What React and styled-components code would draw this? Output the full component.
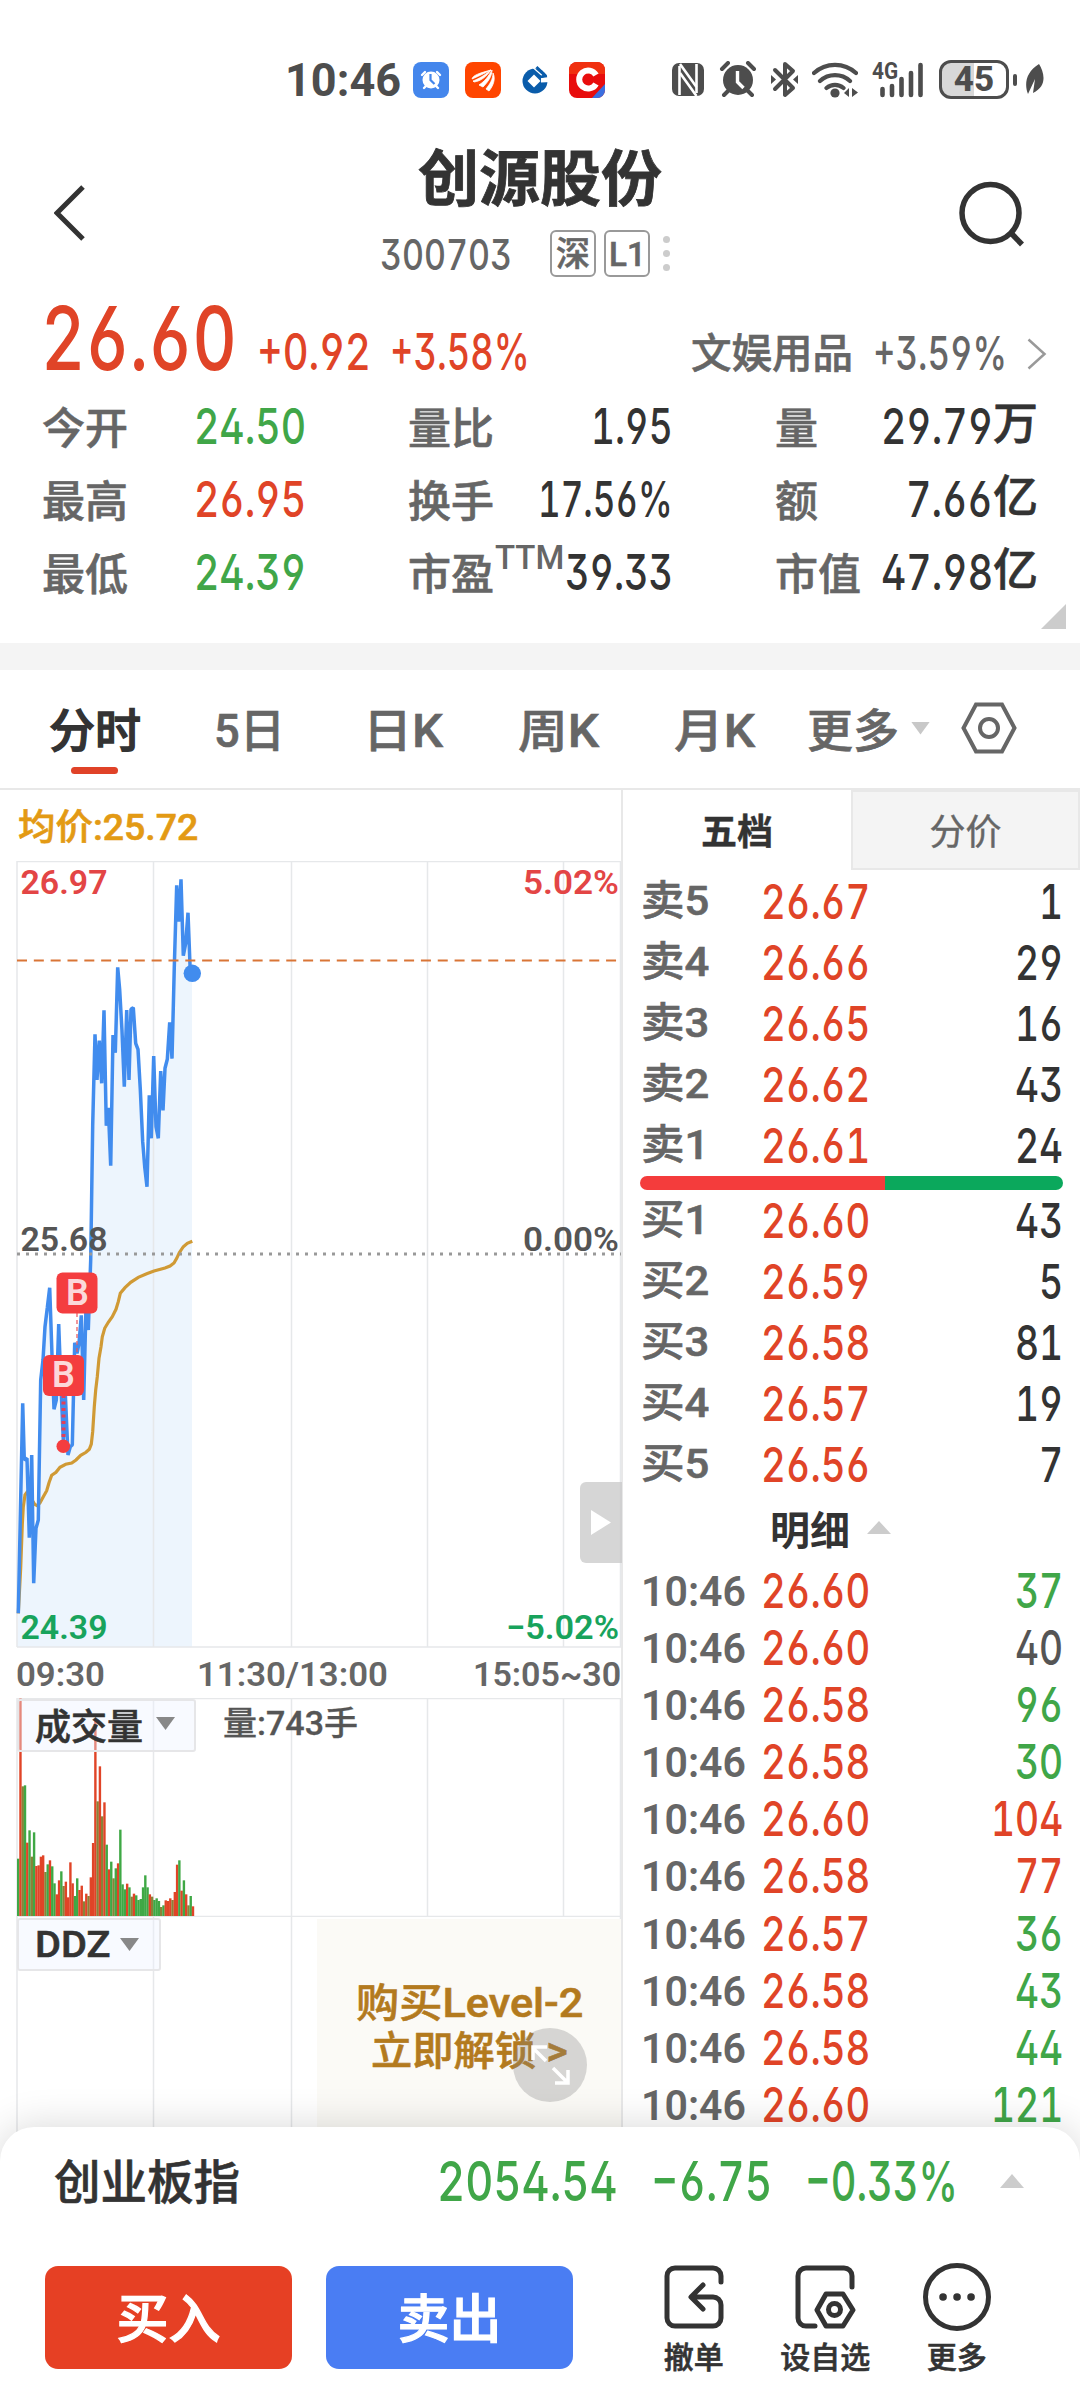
import React, { useLayoutEffect, useRef, useState } from 'react'
import styled, { createGlobalStyle, css } from 'styled-components'

const RED = '#e04427';
const GREEN = '#40a648';

const stats = [
  { label: '今开', value: '24.50', w: 112, color: GREEN },
  { label: '量比', value: '1.95', w: 82 },
  { label: '量', value: '29.79', unit: '万', w: 112 },
  { label: '最高', value: '26.95', w: 112, color: RED },
  { label: '换手', value: '17.56%', w: 135 },
  { label: '额', value: '7.66', unit: '亿', w: 87 },
  { label: '最低', value: '24.39', w: 112, color: GREEN },
  { label: '市盈', sup: 'TTM', value: '39.33', w: 108 },
  { label: '市值', value: '47.98', unit: '亿', w: 112 },
];

const sells = [
  ['卖5', '26.67', '1'],
  ['卖4', '26.66', '29'],
  ['卖3', '26.65', '16'],
  ['卖2', '26.62', '43'],
  ['卖1', '26.61', '24'],
];

const buys = [
  ['买1', '26.60', '43'],
  ['买2', '26.59', '5'],
  ['买3', '26.58', '81'],
  ['买4', '26.57', '19'],
  ['买5', '26.56', '7'],
];

const trades = [
  ['26.60', '37', GREEN],
  ['26.60', '40', '#555'],
  ['26.58', '96', GREEN],
  ['26.58', '30', GREEN],
  ['26.60', '104', RED],
  ['26.58', '77', RED],
  ['26.57', '36', GREEN],
  ['26.58', '43', GREEN],
  ['26.58', '44', GREEN],
  ['26.60', '121', GREEN],
];

// minute prices, in thirds of a pixel
const price = [
  [55, 2257], [68, 1627], [73, 1797], [81, 1792], [88, 2030], [95, 1782], [101, 2167], [108, 2002], [115, 1977],
  [122, 1557], [129, 1497], [135, 1397], [142, 1340], [149, 1280], [156, 1482], [162, 1645], [169, 1617], [176, 1389],
  [183, 1577], [190, 1737], [196, 1597], [204, 1782], [211, 1757], [217, 1752], [224, 1445], [231, 1477], [237, 1447],
  [244, 1363], [251, 1617], [258, 1337], [265, 1407], [272, 1197], [278, 792], [285, 520], [291, 657], [298, 539],
  [305, 667], [312, 448], [319, 794], [325, 740], [332, 914], [339, 522], [346, 575], [353, 319], [359, 387],
  [366, 509], [373, 677], [380, 447], [387, 657], [393, 445], [400, 440], [407, 547], [414, 565], [421, 685],
  [428, 842], [434, 917], [441, 977], [448, 703], [454, 832], [461, 585], [468, 797], [475, 832], [482, 630],
  [489, 748], [495, 622], [502, 595], [509, 484], [516, 593], [523, 317], [530, 73], [536, 182], [543, 55],
  [550, 284], [557, 247], [564, 155], [570, 312], [576, 337],
];

const average = [
  [55, 2257], [62, 2120], [67, 1990], [70, 1937], [75, 1902], [80, 1895], [88, 1905], [95, 1915], [104, 1930],
  [112, 1934], [120, 1925], [130, 1907], [140, 1889], [147, 1865], [155, 1843], [168, 1834], [180, 1819],
  [197, 1810], [215, 1806], [228, 1797], [242, 1783], [258, 1774], [268, 1765], [274, 1749], [278, 1712],
  [283, 1637], [287, 1587], [292, 1547], [297, 1492], [303, 1457], [307, 1427], [314, 1402], [325, 1384],
  [337, 1367], [348, 1345], [355, 1322], [361, 1297], [375, 1280], [392, 1264], [415, 1249], [440, 1238],
  [462, 1230], [495, 1221], [510, 1215], [522, 1206], [530, 1192], [538, 1175], [550, 1157], [562, 1147], [577, 1141],
];

// r = up, g = down, m = both sides
const volume = 'g172 r652 m389 g392 r220 g257 m178 g251 r150 r152 r178 r182 m132 g155 r167 g149 g98 r65 r107 g134 m90 r103 r56 r161 r98 g60 g113 r78 r91 m44 r67 m60 r116 r219 r590 m344 r449 m299 r341 g214 r140 g163 m113 g143 r158 g259 g95 g80 r97 g86 m58 r67 g62 g48 g51 g86 g122 g86 r65 m58 g48 g53 g45 m27 g32 r47 r45 r53 m48 r72 r154 g167 r76 g107 r65 m32 g60 r29'
  .split(' ')
  .map((b) => ({ color: { r: RED, g: '#3fa845', m: '#8a8238' }[b[0]], h: Number(b.slice(1)) / 3 }));

const toPoints = (list) => list.map(([x, y]) => `${(x / 3).toFixed(1)},${(y / 3).toFixed(1)}`).join(' ');

// Squeezes or stretches a run of text to a given width
function Fit({ w, children, ...rest }) {
  const ref = useRef(null);
  const [k, setK] = useState(1);

  useLayoutEffect(() => {
    setK(w / ref.current.offsetWidth);
  }, [w, children])

  return (
    <FitBox $w={w} {...rest}>
      <FitInner ref={ref} style={{ transform: `scaleX(${k})` }}>{children}</FitInner>
    </FitBox>
  )
}

function StatusBar() {
  return (
    <StatusRow>
      <Clock w={116}>10:46</Clock>
      <AppIcons>
        <svg width="36" height="36" viewBox="0 0 36 36">
          <rect width="36" height="36" rx="8" fill="#4486ec" />
          <circle cx="18" cy="18" r="8.5" fill="#fff" />
          <path d="M9 13l3-3M27 13l-3-3M11 26l2-2M25 26l-2-2" stroke="#fff" strokeWidth="2.4" strokeLinecap="round" />
          <path d="M17.500 12v6l4 4" stroke="#4486ec" strokeWidth="2.200" fill="none" />
        </svg>
        <svg width="36" height="36" viewBox="0 0 36 36">
          <rect width="36" height="36" rx="8" fill="#ff4500" />
          <path d="M7 17c1-4 8-6 19-9-6 3-12 6-19 9z M8 19c5-2 11-5 18-11-5 7-10 11-17 12z M14 23c6-4 9-8 13-15 0 6-4 12-9 17z M21 27c4-5 7-10 7-16 3 6 0 13-4 18z" fill="#fff" stroke="#fff" strokeWidth=".8" />
        </svg>
        <svg width="36" height="36" viewBox="0 0 36 36">
          <circle cx="18" cy="19" r="12.500" fill="#0a5caa" />
          <path d="M24 16l10-3v7l-10 .5z" fill="#fff" />
          <path d="M17 12.500l6.500 6.500-6.500 6.500-6.500-6.500z" fill="#fff" />
          <path d="M16 5.500l9 8M19 4.500l10 9.500" stroke="#fff" strokeWidth="1.200" />
          <path d="M19.500 5l9 8.500M23 15l7-1" stroke="#0a5caa" strokeWidth="2.600" />
        </svg>
        <svg width="36" height="36" viewBox="0 0 36 36">
          <rect width="36" height="36" rx="8" fill="#e80d0d" />
          <path d="M0 12V8a8 8 0 0 1 8-8h20a8 8 0 0 1 8 8v4z" fill="#f0300f" />
          <path d="M36 22v6a8 8 0 0 1-8 8h-5z" fill="#3a6fe0" />
          <path d="M27 13a9 9 0 1 0 0 9" fill="none" stroke="#fff" strokeWidth="6" />
        </svg>
      </AppIcons>
      <SystemIcons>
        <svg width="34" height="36" viewBox="0 0 34 36">
          <rect x="1" y="1" width="32" height="33" rx="7" fill="#4d4d4d" />
          <path d="M8.500 33V4M25.500 2v29" stroke="#fff" strokeWidth="2.600" />
          <path d="M9 2l16.500 23M9 11l16.500 23" stroke="#fff" strokeWidth="2.600" />
        </svg>
        <svg width="38" height="37" viewBox="0 0 38 37">
          <circle cx="19" cy="19" r="15" fill="#4d4d4d" />
          <path d="M3 8l6-6M35 8l-6-6M5 34l6-6M33 34l-6-6" stroke="#4d4d4d" strokeWidth="4" strokeLinecap="round" />
          <path d="M18.500 10v11l6 6" stroke="#fff" strokeWidth="3.400" fill="none" />
        </svg>
        <svg width="27" height="37" viewBox="0 0 27 37">
          <path d="M4 9l18 18-8 7V3l8 7L4 28" fill="none" stroke="#4d4d4d" strokeWidth="4" strokeLinejoin="round" strokeLinecap="round" />
          <path d="M0 14l5 4.500-5 4.500zM27 14l-5 4.500 5 4.500z" fill="#4d4d4d" />
        </svg>
        <svg width="46" height="37" viewBox="0 0 46 37">
          <path d="M2 12a31 31 0 0 1 42 0M8 20a22 22 0 0 1 30 0M14.500 27a13 13 0 0 1 17 0" fill="none" stroke="#4d4d4d" strokeWidth="4.200" strokeLinecap="round" />
          <circle cx="23" cy="32" r="4.600" fill="#4d4d4d" />
          <path d="M37 27v9l-5-4zM40 27v9l6-4.500z" fill="#4d4d4d" />
        </svg>
        <Signal>
          <Net w={26}>4G</Net>
          <svg width="46" height="36" viewBox="0 0 46 36">
            <path d="M2.500 27v6M12 24v9M21.500 17v16M31 11v22M40.500 3v30" stroke="#4d4d4d" strokeWidth="4.600" strokeLinecap="round" />
          </svg>
        </Signal>
        <Battery>45</Battery>
        <Nub />
        <svg width="20" height="32" viewBox="0 0 20 32">
          <path d="M14 0c5 8 9 22-6 29L10 15 3 30C-1 20 1 8 14 0z" fill="#4d4d4d" />
        </svg>
      </SystemIcons>
    </StatusRow>
  )
}

function Header() {
  return (
    <HeaderGrid>
      <Back width="32" height="56" viewBox="0 0 32 56">
        <path d="M29 2L3 28l26 26" fill="none" stroke="#333" strokeWidth="5" />
      </Back>
      <div>
        <Title><Fit w={244}>创源股份</Fit></Title>
        <SubTitle>
          <Code w={132}>300703</Code>
          <Badge $gap={38}>深</Badge>
          <Badge $gap={8}><Fit w={37}>L1</Fit></Badge>
          <Dots><i /><i /><i /></Dots>
        </SubTitle>
      </div>
      <Search width="66" height="70" viewBox="0 0 66 70">
        <circle cx="31.500" cy="33" r="28.500" fill="none" stroke="#333" strokeWidth="5.500" />
        <path d="M51 52l12 12.500" stroke="#333" strokeWidth="5.500" />
      </Search>
    </HeaderGrid>
  )
}

function Quote() {
  return (
    <QuoteBox>
      <PriceRow>
        <Last w={196}>26.60</Last>
        <Change w={114} $gap={20}>+0.92</Change>
        <Change w={140} $gap={19}>+3.58%</Change>
        <Sector>
          <SectorName>文娱用品</SectorName>
          <Fit w={134}>+3.59%</Fit>
          <svg width="20" height="32" viewBox="0 0 20 32">
            <path d="M1.500 1.500L17.500 16 1.500 30.500" fill="none" stroke="#999" strokeWidth="2.500" />
          </svg>
        </Sector>
      </PriceRow>
      <StatGrid>
        {stats.map((s, i) => (
          <Stat key={s.label} $first={i % 3 === 0}>
            <StatLabel>{s.label}{s.sup && <Sup>{s.sup}</Sup>}</StatLabel>
            <StatValue $color={s.color}><Fit w={s.w}>{s.value}</Fit>{s.unit && <Unit>{s.unit}</Unit>}</StatValue>
          </Stat>
        ))}
      </StatGrid>
      <Corner />
    </QuoteBox>
  )
}

function PriceChart() {
  const line = toPoints(price);
  return (
    <svg width="622" height="787" viewBox="0 0 622 787">
      <polygon points={`17,786 ${line} 192,786`} fill="#edf5fd" />
      <path d="M17 0v786M153.500 0v786M291.500 0v786M427.500 0v786M563.500 0v786M620.500 0v786M17 .5h604M17 786h604" stroke="#e6e8ea" strokeWidth="1.500" fill="none" />
      <polyline points={toPoints(average)} fill="none" stroke="#d09a35" strokeWidth="3.200" />
      <polyline points={line} fill="none" stroke="#418cee" strokeWidth="3.500" strokeLinejoin="bevel" />
      <path d="M17 99.500h604" stroke="#d97536" strokeWidth="2.200" strokeDasharray="10 6.830" />
      <path d="M17 393h604" stroke="#999" strokeWidth="3" strokeDasharray="3 6" />
      <circle cx="192.300" cy="112.300" r="8.700" fill="#418cee" />
      <path d="M77 452v42" stroke="#e8545a" strokeWidth="1.200" strokeDasharray="4 3" />
      <path d="M63.500 534v45" stroke="#e0405a" strokeWidth="4" strokeDasharray="3 3.500" />
      <circle cx="63.300" cy="585.300" r="6.800" fill="#f43d3f" />
      <rect x="56.500" y="411.500" width="41" height="41" rx="6" fill="#f43d3f" />
      <rect x="43" y="494" width="41" height="41" rx="6" fill="#f43d3f" />
      <Mark x="77.500" y="443.500">B</Mark>
      <Mark x="63.500" y="526">B</Mark>
      <AxisText x="20.500" y="33" textLength="87" lengthAdjust="spacingAndGlyphs" fill="#e34545">26.97</AxisText>
      <AxisText x="523" y="33" textLength="96" lengthAdjust="spacingAndGlyphs" fill="#e34545">5.02%</AxisText>
      <AxisText x="20.500" y="390" textLength="87" lengthAdjust="spacingAndGlyphs" fill="#555">25.68</AxisText>
      <AxisText x="523" y="390" textLength="96" lengthAdjust="spacingAndGlyphs" fill="#555">0.00%</AxisText>
      <AxisText x="20.500" y="778" textLength="87" lengthAdjust="spacingAndGlyphs" fill="#18a35c">24.39</AxisText>
      <AxisText x="506" y="778" textLength="113" lengthAdjust="spacingAndGlyphs" fill="#18a35c">−5.02%</AxisText>
    </svg>
  )
}

function VolumeChart() {
  return (
    <svg width="622" height="219" viewBox="0 0 622 219">
      <path d="M17 0v219M153.500 0v219M291.500 0v219M427.500 0v219M563.500 0v219M620.500 0v219M17 .5h604M17 218.500h604" stroke="#e6e8ea" strokeWidth="1.500" fill="none" />
      {volume.map((b, i) => (
        <rect key={i} x={17 + i * 2.27} y={218 - b.h} width="2.400" height={b.h} fill={b.color} />
      ))}
    </svg>
  )
}

function Book() {
  const row = ([name, p, qty]) => (
    <BookRow key={name}>
      <BookName w={68}>{name}</BookName>
      <BookPrice w={109}>{p}</BookPrice>
      <Qty w={qty.length * 24}>{qty}</Qty>
    </BookRow>
  );

  return (
    <BookPanel>
      <BookTabs>
        <BookTab $active>五档</BookTab>
        <BookTab>分价</BookTab>
      </BookTabs>
      {sells.map(row)}
      <Ratio />
      {buys.map(row)}
      <DetailTitle>明细<Triangle $up $w={24} $h={13} $color="#ccc" /></DetailTitle>
      {trades.map(([p, qty, color], i) => (
        <TradeRow key={i}>
          <TradeTime w={105}>10:46</TradeTime>
          <BookPrice w={109}>{p}</BookPrice>
          <Qty w={qty.length * 24} $color={color}>{qty}</Qty>
        </TradeRow>
      ))}
    </BookPanel>
  )
}

function BottomSheet() {
  return (
    <Sheet>
      <IndexRow>
        <IndexName>创业板指</IndexName>
        <IndexNum w={181}>2054.54</IndexNum>
        <IndexNum w={121}>−6.75</IndexNum>
        <IndexNum w={153}>−0.33%</IndexNum>
        <Triangle $up $w={24} $h={14} $color="#ccc" />
      </IndexRow>
      <ActionRow>
        <TradeButton $bg="#e64024">买入</TradeButton>
        <TradeButton $bg="#4a7df3">卖出</TradeButton>
        <Tools>
          <Tool>
            <svg width="68" height="68" viewBox="0 0 68 68">
              <path d="M61 19v-6a8 8 0 0 0-8-8H15a8 8 0 0 0-8 8v42a8 8 0 0 0 8 8h38a8 8 0 0 0 8-8V42a8 8 0 0 0-8-8H33M43 22L31 34l12 12" />
            </svg>
            撤单
          </Tool>
          <Tool>
            <svg width="68" height="68" viewBox="0 0 68 68">
              <path d="M61 24V13a8 8 0 0 0-8-8H15a8 8 0 0 0-8 8v42a8 8 0 0 0 8 8h9M35 31h17l10 16-10 16H35L26 47z" />
              <circle cx="43.500" cy="46.500" r="6" />
            </svg>
            设自选
          </Tool>
          <Tool>
            <svg width="68" height="68" viewBox="0 0 68 68">
              <circle cx="34" cy="34" r="31.500" />
              <path d="M20 34h.1M34 34h.1M48 34h.1" strokeWidth="7.500" />
            </svg>
            更多
          </Tool>
        </Tools>
      </ActionRow>
    </Sheet>
  )
}

function App() {
  return (
    <Phone>
      <GlobalStyle />
      <StatusBar />
      <Header />
      <Quote />
      <Band />
      <Tabs>
        <Tab $w={165} $active><Fit w={92}>分时</Fit></Tab>
        <Tab $w={149}><Fit w={71}>5日</Fit></Tab>
        <Tab $w={155}><Fit w={80}>日K</Fit></Tab>
        <Tab $w={156}><Fit w={81}>周K</Fit></Tab>
        <Tab $w={133}><Fit w={81}>月K</Fit></Tab>
        <Tab $w={104}><Fit w={92}>更多</Fit></Tab>
        <Triangle $w={19} $h={13} $color="#c8c8c8" />
        <Hexagon width="56" height="52" viewBox="0 0 56 52">
          <path d="M15 2.500h26L53.500 26 41 49.500H15L2.500 26z" />
          <circle cx="28" cy="26" r="9" />
        </Hexagon>
      </Tabs>
      <Main>
        <ChartPanel>
          <AvgRow><Fit w={180}>均价:25.72</Fit></AvgRow>
          <PriceChart />
          <TimeAxis>
            <Fit w={89}>09:30</Fit>
            <MidTime w={191}>11:30/13:00</MidTime>
            <Fit w={148}>15:05~30</Fit>
          </TimeAxis>
          <SubChart>
            <VolumeChart />
            <Picker>成交量<Triangle $w={19} $h={13} $color="#888" /></Picker>
            <VolText><Fit w={135}>量:743手</Fit></VolText>
          </SubChart>
          <DdzChart>
            <svg width="622" height="243" viewBox="0 0 622 243">
              <path d="M17 0v243M153.500 0v243M291.500 0v243M620.500 0v243" stroke="#e6e8ea" strokeWidth="1.500" fill="none" />
            </svg>
            <Picker $narrow><Fit w={75}>DDZ</Fit><Triangle $w={19} $h={13} $color="#888" /></Picker>
            <Promo>
              <Fit w={227}>购买Level-2</Fit>
              <Fit w={197}>立即解锁 &gt;</Fit>
            </Promo>
            <Expand>
              <svg width="74" height="74" viewBox="0 0 74 74">
                <path d="M33 33L20 20M20 32V19h14M40 40l14 14M42 55h13V42" fill="none" stroke="#fff" strokeWidth="3.500" />
              </svg>
            </Expand>
          </DdzChart>
          <Play />
        </ChartPanel>
        <Book />
      </Main>
      <BottomSheet />
    </Phone>
  )
}

const GlobalStyle = createGlobalStyle`
  body {
    margin: 0;
    background: #fff;
  }

  * {
    box-sizing: border-box;
  }

  svg {
    display: block;
    flex: none;
  }
`;

const digits = css`
  font-family: Inter, Roboto, "Noto Sans CJK SC", sans-serif;
  font-feature-settings: 'ss01', 'tnum';
  font-weight: 460;
`;

// between regular and bold
const medium = css`
  font-weight: 500;
  -webkit-text-stroke: 0.6px currentColor;
`;

const Phone = styled.div`
  width: 1080px;
  height: 2400px;
  overflow: hidden;
  background: #fff;
  color: #333;
  font-family: Roboto, "Noto Sans CJK SC", sans-serif;
`;

const FitBox = styled.span`
  display: inline-block;
  flex: none;
  width: ${(p) => p.$w}px;
  white-space: nowrap;
`;

const FitInner = styled.span`
  display: inline-block;
  transform-origin: 0 50%;
`;

const Triangle = styled.i`
  flex: none;
  width: ${(p) => p.$w}px;
  height: ${(p) => p.$h}px;
  background: ${(p) => p.$color};
  clip-path: ${(p) => (p.$up ? 'polygon(50% 0, 100% 100%, 0 100%)' : 'polygon(0 0, 100% 0, 50% 100%)')};
`;

const StatusRow = styled.div`
  display: flex;
  align-items: center;
  height: 120px;
  padding: 40px 0 1px 285px;
`;

const Clock = styled(Fit)`
  font-size: 47px;
  font-weight: 700;
  color: #4d4d4d;
`;

const AppIcons = styled.div`
  display: flex;
  gap: 16px;
  margin-left: 12px;
`;

const SystemIcons = styled.div`
  display: flex;
  align-items: center;
  margin-left: 66px;

  svg {
    margin-right: 14px;
  }
`;

const Signal = styled.div`
  position: relative;
  width: 53px;
  padding-left: 8px;
  margin-right: 14px;
`;

const Net = styled(Fit)`
  position: absolute;
  left: 0;
  top: -5px;
  font-size: 24px;
  font-weight: 700;
  color: #4d4d4d;
`;

const Battery = styled.div`
  width: 70px;
  height: 39px;
  border: 3px solid #4d4d4d;
  border-radius: 12px;
  background: linear-gradient(90deg, #d8d8d8 50%, #fff 50%);
  color: #4d4d4d;
  font-size: 35px;
  font-weight: 800;
  line-height: 34px;
  text-align: center;
`;

const Nub = styled.i`
  width: 4px;
  height: 12px;
  margin: 0 8px 0 4px;
  border-radius: 2px;
  background: #4d4d4d;
`;

const HeaderGrid = styled.div`
  display: grid;
  grid-template-columns: 200px 1fr 200px;
  height: 170px;
  padding-top: 22px;
`;

const Back = styled.svg`
  margin: 43px 0 0 54px;
`;

const Search = styled.svg`
  margin: 38px 0 0 79px;
`;

const Title = styled.h1`
  height: 70px;
  margin: 0;
  font: 700 61px/66px "Noto Sans CJK SC", sans-serif;
  -webkit-text-stroke: 0.8px currentColor;
  text-align: center;
`;

const SubTitle = styled.div`
  display: flex;
  align-items: center;
  height: 78px;
  padding: 5px 0 0 180px;
  color: #666;
`;

const Code = styled(Fit)`
  ${digits}
  font-size: 43px;
`;

const Badge = styled.span`
  ${medium}
  display: flex;
  align-items: center;
  justify-content: center;
  width: 46px;
  height: 47px;
  margin-left: ${(p) => p.$gap}px;
  border: 2px solid #999;
  border-radius: 6px;
  font-size: 34px;
  line-height: 38px;
`;

const Dots = styled.div`
  display: grid;
  gap: 7px;
  margin-left: 13px;

  i {
    width: 7px;
    height: 7px;
    border-radius: 50%;
    background: #ccc;
  }
`;

const QuoteBox = styled.section`
  position: relative;
  height: 353px;
`;

const PriceRow = styled.div`
  ${digits}
  display: flex;
  align-items: baseline;
  height: 99px;
  padding: 0 33px 0 41px;
  color: ${RED};
`;

const Last = styled(Fit)`
  font-size: 88px;
  line-height: 97px;
`;

const Change = styled(Fit)`
  margin-left: ${(p) => p.$gap}px;
  font-size: 51px;
`;

const Sector = styled.div`
  display: flex;
  align-items: baseline;
  gap: 20px;
  margin-left: auto;
  font-size: 47px;
  color: #666;
`;

const SectorName = styled.span`
  ${medium}
  position: relative;
  top: -2px;
  font-size: 40.500px;
`;

const StatGrid = styled.div`
  display: grid;
  grid-template-columns: 366px 367px 1fr;
  grid-auto-rows: 73px;
  padding: 0 42px;
`;

const Stat = styled.div`
  display: flex;
  align-items: center;
  justify-content: ${(p) => (p.$first ? 'flex-start' : 'space-between')};
  gap: ${(p) => (p.$first ? '66px' : '0')};

  &:nth-child(3n + 2) {
    padding-right: 102px;
  }
`;

const StatLabel = styled.span`
  ${medium}
  position: relative;
  padding-bottom: 2px;
  font-size: 43px;
  color: #666;
`;

const Sup = styled.sup`
  position: absolute;
  left: 87px;
  top: -2px;
  font-size: 33px;
  -webkit-text-stroke: 0;
`;

const StatValue = styled.span`
  ${digits}
  display: flex;
  align-items: center;
  font-size: 50px;
  line-height: 60px;
  color: ${(p) => p.$color || '#333'};
`;

const Unit = styled.span`
  ${medium}
  width: 45px;
  margin-top: -4px;
  font-size: 45px;
`;

const Corner = styled.i`
  position: absolute;
  right: 14px;
  bottom: 14px;
  width: 25px;
  height: 25px;
  background: #ccc;
  clip-path: polygon(100% 0, 100% 100%, 0 100%);
`;

const Band = styled.div`
  height: 27px;
  background: #f4f4f4;
`;

const Tabs = styled.nav`
  display: flex;
  align-items: center;
  height: 120px;
  padding: 0 0 2px 49px;
  border-bottom: 2px solid #e8e8e8;
`;

const Tab = styled.span`
  ${medium}
  position: relative;
  flex: none;
  width: ${(p) => p.$w}px;
  padding-bottom: 2px;
  font-size: 46px;
  color: ${(p) => (p.$active ? '#333' : '#666')};

  ${(p) => p.$active && css`
    -webkit-text-stroke: 1.3px currentColor;

    &::after {
      content: '';
      position: absolute;
      left: 22px;
      bottom: -12px;
      width: 47px;
      height: 7px;
      border-radius: 4px;
      background: #e04228;
    }
  `}
`;

const Hexagon = styled.svg`
  margin-left: 31px;
  fill: none;
  stroke: #666;
  stroke-width: 4;
`;

const Main = styled.main`
  display: flex;
  height: 1371px;
  overflow: hidden;
`;

const ChartPanel = styled.section`
  position: relative;
  flex: none;
  width: 623px;
  border-right: 2px solid #e8e8e8;
`;

const AvgRow = styled.div`
  ${medium}
  display: flex;
  align-items: center;
  height: 71px;
  padding: 0 0 3px 18px;
  font-size: 36px;
  color: #e39a14;
`;

const AxisText = styled.text`
  font-size: 34px;
  font-weight: 600;
`;

const Mark = styled.text`
  font-size: 36px;
  font-weight: 600;
  text-anchor: middle;
  fill: #fbd9d9;
`;

const TimeAxis = styled.div`
  display: flex;
  align-items: center;
  justify-content: space-between;
  height: 50px;
  padding: 1px 0 0 16px;
  font-size: 34px;
  font-weight: 600;
  color: #666;
`;

const MidTime = styled(Fit)`
  margin-left: 6px;
`;

const SubChart = styled.div`
  position: relative;
  height: 219px;
`;

const DdzChart = styled.div`
  position: relative;
  height: 243px;
`;

const Picker = styled.div`
  ${medium}
  position: absolute;
  left: 17px;
  top: 1px;
  display: flex;
  align-items: center;
  gap: ${(p) => (p.$narrow ? '10px' : '13px')};
  width: ${(p) => (p.$narrow ? 144 : 179)}px;
  height: 53px;
  padding: 0 0 ${(p) => (p.$narrow ? 0 : 4)}px 16px;
  border: 2px solid #e6e6e8;
  border-radius: 3px;
  background: rgba(238, 243, 255, 0.4);
  font-size: 36px;
`;

const VolText = styled.div`
  position: absolute;
  left: 223px;
  top: -1px;
  font-size: 33px;
  font-weight: 500;
  color: #555;
  -webkit-text-stroke: 0.3px currentColor;
`;

const Promo = styled.div`
  ${medium}
  position: absolute;
  left: 317px;
  top: 2px;
  display: flex;
  flex-direction: column;
  align-items: center;
  width: 304px;
  height: 241px;
  padding-top: 61px;
  background: #fbfaf6;
  color: #b37a1e;
  font-size: 40px;
  line-height: 48px;
`;

const Expand = styled.div`
  position: absolute;
  left: 513px;
  top: 111px;
  border-radius: 50%;
  background: rgba(130, 130, 130, 0.3);
`;

const Play = styled.div`
  position: absolute;
  right: -1px;
  top: 692px;
  width: 42px;
  height: 81px;
  border-radius: 6px 0 0 6px;
  background: rgba(200, 200, 200, 0.75);

  &::after {
    content: '';
    position: absolute;
    left: 11px;
    top: 28px;
    width: 20px;
    height: 25px;
    background: #fff;
    clip-path: polygon(0 0, 100% 50%, 0 100%);
  }
`;

const BookPanel = styled.section`
  flex: 1;
`;

const BookTabs = styled.div`
  display: flex;
  height: 81px;
`;

const BookTab = styled.div`
  display: flex;
  align-items: center;
  justify-content: center;
  width: ${(p) => (p.$active ? 228 : 229)}px;
  height: 80px;
  padding-bottom: 2px;
  border: ${(p) => (p.$active ? '0' : '2px solid #e8e8e8')};
  background: ${(p) => (p.$active ? '#fff' : '#f4f4f4')};
  font-size: 36px;
  font-weight: ${(p) => (p.$active ? 700 : 400)};
  color: ${(p) => (p.$active ? '#333' : '#666')};
  -webkit-text-stroke: 0.4px currentColor;
`;

const BookRow = styled.div`
  display: grid;
  grid-template-columns: 120px 1fr auto;
  align-items: center;
  height: 61px;
  padding: 0 17px 0 18px;
  line-height: 61px;
`;

const TradeRow = styled(BookRow)`
  height: 57.1px;
  line-height: 58px;
`;

const BookName = styled(Fit)`
  ${medium}
  font-size: 41px;
  color: #666;
`;

const BookPrice = styled(Fit)`
  ${digits}
  font-size: 48px;
  color: ${RED};
`;

const Qty = styled(Fit)`
  ${digits}
  font-size: 48px;
  color: ${(p) => p.$color || '#333'};
`;

const TradeTime = styled(Fit)`
  font-size: 43px;
  font-weight: 600;
  color: #666;
`;

const Ratio = styled.div`
  height: 14px;
  margin: 0 17px;
  border-radius: 7px;
  background: linear-gradient(90deg, #f43c3c 58%, #0ba85c 58%);
`;

const DetailTitle = styled.div`
  display: flex;
  align-items: center;
  gap: 17px;
  height: 67px;
  padding: 0 0 2px 147px;
  font-size: 40px;
  font-weight: 700;
`;

const Sheet = styled.footer`
  position: relative;
  height: 273px;
  margin-top: -34px;
  border-radius: 34px 34px 0 0;
  background: #fff;
  box-shadow: 0 0 40px rgba(0, 0, 0, 0.16);
`;

const IndexRow = styled.div`
  display: flex;
  align-items: center;
  height: 108px;
  padding-left: 54px;

  > i {
    margin-left: 9px;
  }
`;

const IndexName = styled.span`
  ${medium}
  width: 383px;
  padding-bottom: 5px;
  font-size: 46.500px;
`;

const IndexNum = styled(Fit)`
  ${digits}
  margin-right: 33px;
  font-size: 55px;
  color: ${GREEN};
`;

const ActionRow = styled.div`
  display: flex;
  padding: 31px 0 0 45px;
`;

const TradeButton = styled.button`
  width: 247px;
  height: 103px;
  margin: 0 34px 0 0;
  padding: 0 0 4px;
  border: 0;
  border-radius: 13px;
  background: ${(p) => p.$bg};
  color: #fff;
  font: 500 52px "Noto Sans CJK SC", sans-serif;
  -webkit-text-stroke: 1.2px #fff;
`;

const Tools = styled.div`
  display: flex;
  margin: -3px 0 0 21px;
`;

const Tool = styled.div`
  ${medium}
  display: flex;
  flex-direction: column;
  align-items: center;
  width: 131.500px;
  font-size: 30px;
  line-height: 53px;

  svg {
    fill: none;
    stroke: #333;
    stroke-width: 5;
    stroke-linecap: round;
    stroke-linejoin: round;
  }
`;

export default App
